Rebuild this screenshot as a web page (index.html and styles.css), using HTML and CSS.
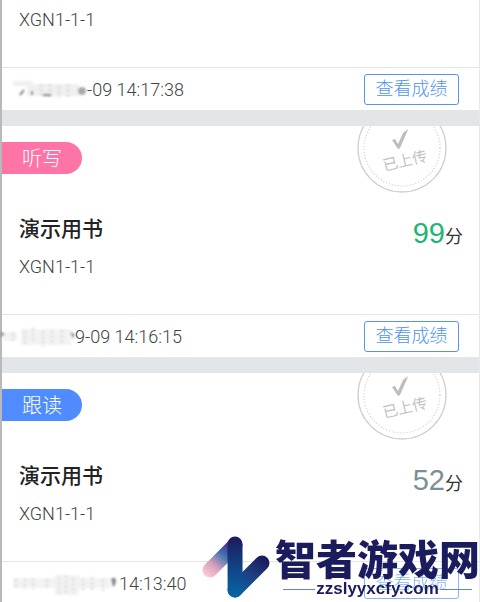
FILE: index.html
```
<!DOCTYPE html>
<html lang="zh-CN">
<head>
    <meta charset="UTF-8">
    <meta name="viewport" content="width=device-width, initial-scale=1.0">
    <title>成绩列表</title>
    <link rel="stylesheet" href="styles.css">
</head>
<body>

    <main class="list">

        <section class="card card-cut">
            <div class="card-body">
                <p class="unit">XGN1-1-1</p>
            </div>
            <div class="card-footer">
                <div class="date">
                    <svg class="smudge" width="68" height="24" viewBox="0 0 68 24" aria-hidden="true">
                        <g filter="url(#soft)">
                            <path d="M-6 4h20v5h-20z M8 7h52v12H8z" fill="#f0f0f0"/>
                            <path d="M22 7v12 M31 7v13 M40 9v11 M49 7v13" stroke="#e2e2e2" stroke-width="4" stroke-dasharray="3 2"/>
                            <path d="M1 18l4-5M13 18v-4M24 18h8" stroke="#777" stroke-width="2"/>
                            <circle cx="63" cy="14" r="4" fill="#aaa"/>
                        </g>
                    </svg>
                    <span>-09 14:17:38</span>
                </div>
                <button type="button" class="btn">查看成绩</button>
            </div>
        </section>

        <section class="card">
            <!-- 已上传印章 -->
            <svg class="stamp" width="90" height="68" viewBox="0 0 90 68" role="img" aria-label="已上传">
                <circle cx="45" cy="22" r="44" class="ring"/>
                <circle cx="45" cy="22" r="38" class="ring ring-dot"/>
                <path d="M35 14l3-1 3 5 5-11 5-4-1 3-7 16-2 1z" class="tick"/>
                <text x="48" y="40" transform="rotate(-13 48 35)" class="stamp-text">已上传</text>
            </svg>
            <span class="tag tag-pink">听写</span>
            <div class="card-body">
                <div class="row">
                    <h2>演示用书</h2>
                    <p class="score score-good"><b>99</b>分</p>
                </div>
                <p class="unit">XGN1-1-1</p>
            </div>
            <div class="card-footer">
                <div class="date">
                    <svg class="smudge" width="56" height="24" viewBox="0 0 56 24" aria-hidden="true">
                        <g filter="url(#soft)">
                            <path d="M-16 8h14v9h-14z M2 5h50v16H2z" fill="#f3f3f3"/>
                            <path d="M-6 9v10 M6 7v15 M14 4v14 M24 7v16 M33 6v14 M43 6v14" stroke="#e2e2e2" stroke-width="3" stroke-dasharray="3 2"/>
                            <path d="M-19 7l5 3-5 4zM51 8l5 2-2 5z" fill="#999"/>
                        </g>
                    </svg>
                    <span>9-09 14:16:15</span>
                </div>
                <button type="button" class="btn">查看成绩</button>
            </div>
        </section>

        <section class="card">
            <svg class="stamp" width="90" height="68" viewBox="0 0 90 68" role="img" aria-label="已上传">
                <circle cx="45" cy="22" r="44" class="ring"/>
                <circle cx="45" cy="22" r="38" class="ring ring-dot"/>
                <path d="M35 14l3-1 3 5 5-11 5-4-1 3-7 16-2 1z" class="tick"/>
                <text x="48" y="40" transform="rotate(-13 48 35)" class="stamp-text">已上传</text>
            </svg>
            <span class="tag tag-blue">跟读</span>
            <div class="card-body">
                <div class="row">
                    <h2>演示用书</h2>
                    <p class="score score-low"><b>52</b>分</p>
                </div>
                <p class="unit">XGN1-1-1</p>
            </div>
            <div class="card-footer">
                <div class="date">
                    <svg class="smudge" width="100" height="24" viewBox="0 0 100 24" aria-hidden="true">
                        <g filter="url(#soft)">
                            <path d="M-6 7h98v10H-6z M36 4h24v20H36z" fill="#f3f3f3"/>
                            <path d="M-3 8v9 M6 7v11 M14 7v11 M28 8v9 M40 6v17 M47 4v18 M54 7v16 M64 7v12 M73 6v13 M84 8v12" stroke="#e2e2e2" stroke-width="3" stroke-dasharray="3 2"/>
                            <path d="M92 8q4-3 5 1q0 5-3 7z" fill="#888"/>
                        </g>
                    </svg>
                    <span>14:13:40</span>
                </div>
                <button type="button" class="btn btn-faded">查看成绩</button>
            </div>
        </section>

    </main>

    <!-- 右下角网站标志 -->
    <div class="brand">
        <svg class="brand-logo" width="68" height="64" viewBox="0 0 68 64" aria-hidden="true">
            <defs>
                <linearGradient id="g1" gradientUnits="userSpaceOnUse" x1="4" y1="40" x2="30" y2="8">
                    <stop offset="0" stop-color="#fbc9cd"/>
                    <stop offset="0.3" stop-color="#d7a0bf"/>
                    <stop offset="0.65" stop-color="#3f72ad"/>
                    <stop offset="0.85" stop-color="#4a3f94"/>
                    <stop offset="1" stop-color="#b0008e"/>
                </linearGradient>
                <linearGradient id="g2" gradientUnits="userSpaceOnUse" x1="34" y1="60" x2="60" y2="22">
                    <stop offset="0" stop-color="#0865a5"/>
                    <stop offset="0.55" stop-color="#1d3f82"/>
                    <stop offset="1" stop-color="#1b1c5e"/>
                </linearGradient>
                <linearGradient id="g3" gradientUnits="userSpaceOnUse" x1="34" y1="2" x2="34" y2="62">
                    <stop offset="0" stop-color="#1b1c5e"/>
                    <stop offset="0.45" stop-color="#123f80"/>
                    <stop offset="1" stop-color="#0865a5"/>
                </linearGradient>
            </defs>
            <path d="M8 35L33 10" stroke="url(#g1)" class="stroke"/>
            <path d="M33 55L60 28" stroke="url(#g2)" class="stroke"/>
            <path d="M33 9L33.1 55" stroke="url(#g3)" class="stroke"/>
        </svg>
        <div class="brand-text">
            <strong>智者游戏网</strong>
            <span class="domain">zzslyyxcfy.com</span>
        </div>
    </div>

    <!-- 日期前半部分的模糊效果 -->
    <svg class="defs" width="0" height="0" aria-hidden="true">
        <filter id="soft"><feGaussianBlur stdDeviation="1"/></filter>
    </svg>

</body>
</html>
```

FILE: styles.css
```
* {
    margin: 0;
    padding: 0;
    box-sizing: border-box;
}

body {
    height: 100vh;
    overflow: hidden;
    background: #e2e6e9;
    font-family: Roboto, "Noto Sans CJK SC", sans-serif;
    color: #444;
}

.list {
    display: flex;
    flex-direction: column;
    gap: 16px;
    border-left: 2px solid #b9b9bc;
    border-right: 1px solid #e6e8ea;
}

/* 卡片 */
.card {
    position: relative;
    background: #fff;
    padding-top: 16px;
}

.card-cut {
    padding-top: 8px;
}

.card-body {
    padding: 40px 16px 35px 17px;
}

.card-cut .card-body {
    padding-top: 0;
}

.row {
    display: flex;
    justify-content: space-between;
    align-items: flex-start;
    height: 30px;
    margin-bottom: 11px;
}

h2 {
    font-size: 21px;
    font-weight: 500;
    line-height: 30px;
    color: #222;
}

.unit {
    font-size: 18px;
    font-weight: 300;
    line-height: 24px;
}

.score {
    padding-top: 4px;
    font-size: 18px;
    line-height: 30px;
    color: #333;
}

.score b {
    font-family: "Liberation Sans", sans-serif;
    font-size: 29px;
    font-weight: 400;
}

.score-good b {
    color: #1fb574;
}

.score-low b {
    color: #7c9091;
}

/* 标签 */
.tag {
    display: block;
    width: 80px;
    height: 32px;
    padding-left: 20px;
    border-radius: 0 16px 16px 0;
    font-size: 20px;
    font-weight: 300;
    line-height: 34px;
    color: #fff;
}

.tag-pink {
    background: #ff74a6;
}

.tag-blue {
    background: #508cff;
}

/* 印章 */
.stamp {
    position: absolute;
    top: 0;
    right: 32px;
}

.ring {
    fill: none;
    stroke: #cfcfcf;
    stroke-width: 1.3;
}

.ring-dot {
    stroke-dasharray: 1 2;
}

.tick {
    fill: #bdbdbd;
}

.stamp-text {
    font-size: 15px;
    fill: #c2c2c2;
    text-anchor: middle;
}

/* 卡片底部 */
.card-footer {
    display: flex;
    justify-content: space-between;
    align-items: center;
    height: 43px;
    padding: 0 20px 0 17px;
    border-top: 1px solid #e2e4e6;
}

.date {
    display: flex;
    align-items: center;
    font-size: 18px;
    font-weight: 300;
}

.smudge {
    overflow: visible;
}

.btn {
    width: 95px;
    height: 31px;
    border: 1px solid #5a92f2;
    border-radius: 3px;
    background: #fff;
    font-family: inherit;
    font-size: 18px;
    font-weight: 300;
    line-height: 26px;
    color: #4f93ee;
    cursor: pointer;
}

.btn-faded {
    opacity: 0.7;
}

/* 网站标志 */
.brand {
    position: fixed;
    right: 0;
    bottom: 3px;
    display: flex;
    align-items: center;
    gap: 5px;
    color: #1b1c5e;
}

.stroke {
    fill: none;
    stroke-width: 15;
    stroke-linecap: round;
}

.brand-text strong {
    display: block;
    font-family: "Noto Sans CJK SC", sans-serif;
    font-size: 41px;
    font-weight: 900;
    line-height: 44px;
}

.domain {
    display: flex;
    align-items: center;
    gap: 1px;
    padding: 0 8px;
    font-family: "Liberation Sans", sans-serif;
    font-size: 17px;
    font-weight: 700;
    line-height: 20px;
}

.domain::before,
.domain::after {
    content: "";
    flex: 1;
    height: 1px;
    background: #6286b5;
}

.defs {
    position: absolute;
}
```
